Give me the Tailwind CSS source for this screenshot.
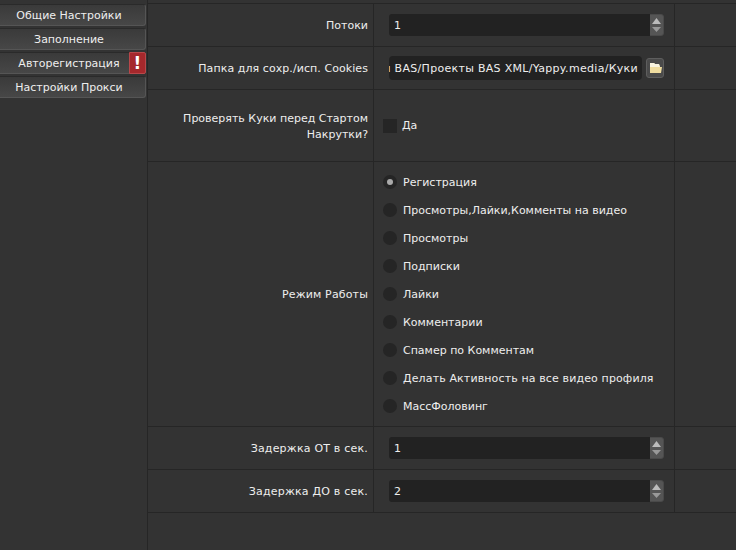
<!DOCTYPE html>
<html lang="ru">
<head>
<meta charset="UTF-8">
<title>Настройки</title>
<script src="https://cdn.jsdelivr.net/npm/@tailwindcss/browser@4"></script>
</head>
<body class="bg-[#333333] text-[#eeeeee] text-[11px] font-['DejaVu_Sans',sans-serif] w-[736px] h-[550px] overflow-hidden">
<div class="flex h-[550px]">
  <!-- Sidebar -->
  <div class="w-[148px] shrink-0 pt-[4px] flex flex-col gap-[2px] border-r border-[#262626]">
    <button class="h-[22px] w-[146px] bg-gradient-to-b from-[#3a3a3a] to-[#474747] border border-l-0 border-[#2a2a2a] border-r-[#555555] border-b-[#555555] rounded-r-[3px] text-center pr-[7px] pt-[2px]">Общие Настройки</button>
    <button class="h-[22px] w-[146px] bg-gradient-to-b from-[#3a3a3a] to-[#474747] border border-l-0 border-[#2a2a2a] border-r-[#555555] border-b-[#555555] rounded-r-[3px] text-center pr-[7px] pt-[2px]">Заполнение</button>
    <div class="relative h-[22px] w-[146px] bg-gradient-to-b from-[#3a3a3a] to-[#474747] border border-l-0 border-[#2a2a2a] border-b-[#555555] rounded-r-[3px] flex items-center justify-center pr-[7px] pt-[2px]">Авторегистрация
      <span class="absolute right-[-1px] top-[-1px] w-[17px] h-[22px] bg-[#a5282c] border border-[#b8474a] rounded-r-[2px] flex items-center justify-center text-white text-[17px] font-bold leading-none">!</span>
    </div>
    <button class="h-[22px] w-[146px] bg-gradient-to-b from-[#3a3a3a] to-[#474747] border border-l-0 border-[#2a2a2a] border-r-[#555555] border-b-[#555555] rounded-r-[3px] text-center pr-[7px] pt-[2px]">Настройки Прокси</button>
  </div>

  <!-- Form -->
  <div class="flex-1 pt-[3px]">
    <div class="flex h-[44px] border-y border-[#262626]">
      <div class="w-[226px] shrink-0 border-r border-[#262626] flex items-center justify-end pr-[5px] pt-[3px] text-right">Потоки</div>
      <div class="w-[301px] shrink-0 border-r border-[#262626] pl-[15px] pr-[10px] flex items-center">
        <div class="w-full h-[22px] bg-[#222222] rounded-[3px] flex items-center pl-[5px] justify-between"><span class="pt-[2px]">1</span>
          <span class="w-[14px] h-[22px] bg-[#555555] border border-l-0 border-[#4a4a4a] rounded-r-[3px] flex flex-col items-center justify-center gap-[3px]">
            <svg width="9" height="6" viewBox="0 0 9 6"><path d="M4.5 0L9 6H0z" fill="#bbbbbb"/></svg>
            <svg width="9" height="5" viewBox="0 0 9 5"><path d="M0 0H9L4.5 5z" fill="#999999"/></svg>
          </span>
        </div>
      </div>
    </div>
    <div class="flex h-[43px] border-b border-[#262626]">
      <div class="w-[226px] shrink-0 border-r border-[#262626] flex items-center justify-end pr-[5px] pt-[2px] text-right tracking-[0.07px]">Папка для сохр./исп. Cookies</div>
      <div class="w-[301px] shrink-0 border-r border-[#262626] pl-[15px] pr-[10px] flex items-center gap-[4px]">
        <div class="flex-1 min-w-0 h-[24px] bg-[#222222] rounded-[4px] flex items-center justify-end overflow-hidden pr-[4px] pt-[2px] whitespace-nowrap tracking-[0.3px]">ı BAS/Проекты BAS XML/Yappy.media/Куки</div>
        <div class="w-[18px] h-[20px] shrink-0 bg-[#4a4a4a] border border-[#5e5e5e] rounded-[3px] flex items-center justify-center">
          <svg width="13" height="12" viewBox="0 0 13 12"><path d="M1 1h4l1 1h4l1 3h2l-1 6H1z" fill="#efdc9f"/><path d="M1 1h4l1 1h4l1 3H1z" fill="#f8f3df"/></svg>
        </div>
      </div>
    </div>
    <div class="flex h-[72px] border-b border-[#262626]">
      <div class="w-[226px] shrink-0 border-r border-[#262626] flex items-center justify-end pr-[5px] pt-[2px] text-right leading-[16px]">Проверять Куки перед Стартом<br>Накрутки?</div>
      <div class="w-[301px] shrink-0 border-r border-[#262626] pl-[9px] flex items-center gap-[5px]">
        <span class="w-[14px] h-[14px] bg-[#252525]"></span><span class="pt-[2px]">Да</span>
      </div>
    </div>
    <div class="flex h-[265px] border-b border-[#262626]">
      <div class="w-[226px] shrink-0 border-r border-[#262626] flex items-center justify-end pr-[5px] pt-[2px] text-right tracking-[0.15px]">Режим Работы</div>
      <div class="w-[301px] shrink-0 border-r border-[#262626] pl-[9px] pt-[6px] flex flex-col">
        <label class="h-[28px] flex items-center gap-[6px]"><span class="w-[14px] h-[14px] rounded-full bg-[#252525] flex items-center justify-center"><span class="w-[6px] h-[6px] rounded-full bg-[#aaaaaa]"></span></span><span class="pt-[3px]">Регистрация</span></label>
        <label class="h-[28px] flex items-center gap-[6px]"><span class="w-[14px] h-[14px] rounded-full bg-[#252525]"></span><span class="pt-[3px]">Просмотры,Лайки,Комменты на видео</span></label>
        <label class="h-[28px] flex items-center gap-[6px]"><span class="w-[14px] h-[14px] rounded-full bg-[#252525]"></span><span class="pt-[3px]">Просмотры</span></label>
        <label class="h-[28px] flex items-center gap-[6px]"><span class="w-[14px] h-[14px] rounded-full bg-[#252525]"></span><span class="pt-[3px]">Подписки</span></label>
        <label class="h-[28px] flex items-center gap-[6px]"><span class="w-[14px] h-[14px] rounded-full bg-[#252525]"></span><span class="pt-[3px]">Лайки</span></label>
        <label class="h-[28px] flex items-center gap-[6px]"><span class="w-[14px] h-[14px] rounded-full bg-[#252525]"></span><span class="pt-[3px]">Комментарии</span></label>
        <label class="h-[28px] flex items-center gap-[6px]"><span class="w-[14px] h-[14px] rounded-full bg-[#252525]"></span><span class="pt-[3px]">Спамер по Комментам</span></label>
        <label class="h-[28px] flex items-center gap-[6px] tracking-[0.13px]"><span class="w-[14px] h-[14px] rounded-full bg-[#252525]"></span><span class="pt-[3px]">Делать Активность на все видео профиля</span></label>
        <label class="h-[28px] flex items-center gap-[6px]"><span class="w-[14px] h-[14px] rounded-full bg-[#252525]"></span><span class="pt-[3px]">МассФоловинг</span></label>
      </div>
    </div>
    <div class="flex h-[43px] border-b border-[#262626]">
      <div class="w-[226px] shrink-0 border-r border-[#262626] flex items-center justify-end pr-[5px] pt-[3px] text-right tracking-[0.2px]">Задержка ОТ в сек.</div>
      <div class="w-[301px] shrink-0 border-r border-[#262626] pl-[15px] pr-[10px] flex items-center">
        <div class="w-full h-[22px] bg-[#222222] rounded-[3px] flex items-center pl-[5px] justify-between"><span class="pt-[2px]">1</span>
          <span class="w-[14px] h-[22px] bg-[#555555] border border-l-0 border-[#4a4a4a] rounded-r-[3px] flex flex-col items-center justify-center gap-[3px]">
            <svg width="9" height="6" viewBox="0 0 9 6"><path d="M4.5 0L9 6H0z" fill="#bbbbbb"/></svg>
            <svg width="9" height="5" viewBox="0 0 9 5"><path d="M0 0H9L4.5 5z" fill="#999999"/></svg>
          </span>
        </div>
      </div>
    </div>
    <div class="flex h-[43px] border-b border-[#262626]">
      <div class="w-[226px] shrink-0 border-r border-[#262626] flex items-center justify-end pr-[5px] pt-[3px] text-right tracking-[0.2px]">Задержка ДО в сек.</div>
      <div class="w-[301px] shrink-0 border-r border-[#262626] pl-[15px] pr-[10px] flex items-center">
        <div class="w-full h-[22px] bg-[#222222] rounded-[3px] flex items-center pl-[5px] justify-between"><span class="pt-[2px]">2</span>
          <span class="w-[14px] h-[22px] bg-[#555555] border border-l-0 border-[#4a4a4a] rounded-r-[3px] flex flex-col items-center justify-center gap-[3px]">
            <svg width="9" height="6" viewBox="0 0 9 6"><path d="M4.5 0L9 6H0z" fill="#bbbbbb"/></svg>
            <svg width="9" height="5" viewBox="0 0 9 5"><path d="M0 0H9L4.5 5z" fill="#999999"/></svg>
          </span>
        </div>
      </div>
    </div>
  </div>
</div>
</body>
</html>
